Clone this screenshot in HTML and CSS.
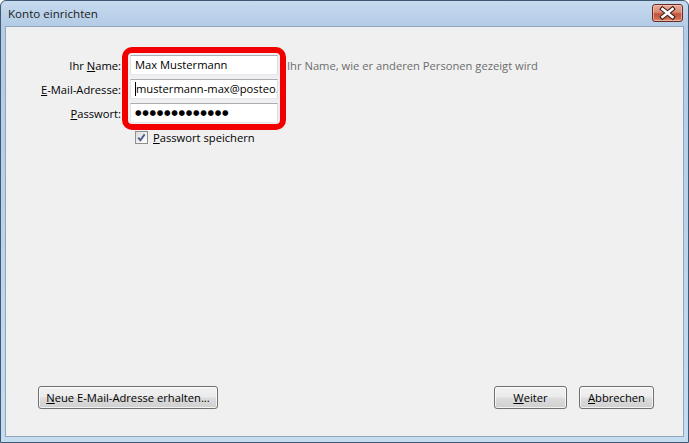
FILE: index.html
```html
<!DOCTYPE html>
<html lang="de">
<head>
<meta charset="utf-8">
<title>Konto einrichten</title>
<link rel="stylesheet" href="styles.css">
</head>
<body>
<div class="window">
  <div class="titlebar">
    <span class="title">Konto einrichten</span>
    <button class="close" aria-label="Schließen">
      <svg width="29" height="16" viewBox="0 0 29 16">
        <path d="M9.5 4 L19.5 12 M19.5 4 L9.5 12" stroke="#3b1a14" stroke-width="4.6" stroke-linecap="square" fill="none"/>
        <path d="M9.5 4 L19.5 12 M19.5 4 L9.5 12" stroke="#ffffff" stroke-width="2.6" stroke-linecap="square" fill="none"/>
      </svg>
    </button>
  </div>
  <div class="client">
    <div class="form">
      <label class="lbl">Ihr <u>N</u>ame:</label>
      <div class="field">Max Mustermann</div>
      <span class="hint">Ihr Name, wie er anderen Personen gezeigt wird</span>

      <label class="lbl"><u>E</u>-Mail-Adresse:</label>
      <div class="field"><span class="caret"></span><span class="clip">mustermann-max@posteo.de</span></div>
      <span></span>

      <label class="lbl"><u>P</u>asswort:</label>
      <div class="field"><span class="dots">●●●●●●●●●●●●●</span></div>
      <span></span>

      <span></span>
      <div class="check">
        <span class="box">
          <svg width="11" height="11" viewBox="0 0 11 11"><path d="M2.2 5.6 L4.4 8.2 L8.6 2.4" stroke="#4a5a85" stroke-width="1.8" fill="none"/></svg>
        </span>
        <span><u>P</u>asswort speichern</span>
      </div>
    </div>
    <div class="highlight"></div>
    <div class="actions">
      <button class="btn wide"><u>N</u>eue E-Mail-Adresse erhalten...</button>
      <div class="right">
        <button class="btn weiter"><u>W</u>eiter</button>
        <button class="btn cancel"><u>A</u>bbrechen</button>
      </div>
    </div>
  </div>
</div>
</body>
</html>
```

FILE: styles.css
```css
* { box-sizing: border-box; }
html, body { margin: 0; padding: 0; background: #ffffff; }
body {
  font-family: "Open Sans", "Noto Sans", sans-serif;
  font-size: 11.2px;
  color: #000;
}
.window {
  width: 689px;
  height: 443px;
  border: 1px solid #3f5874;
  border-radius: 6px 6px 0 0;
  padding: 0 4px 5px 4px;
  display: flex;
  flex-direction: column;
  background: linear-gradient(180deg, #c6daef 0px, #b4cce6 24px, #b6cee7 120px, #bfd6ec 300px, #c6ddef 443px);
}
.titlebar {
  height: 25px;
  display: flex;
  align-items: flex-start;
  justify-content: space-between;
}
.title {
  margin-top: 5px;
  margin-left: 3px;
  font-size: 11.6px;
  color: #1a1a1a;
}
.close {
  margin-top: 3px;
  margin-right: 1px;
  width: 31px;
  height: 18px;
  padding: 0;
  border: 1px solid #6a2b22;
  border-radius: 3px;
  background: linear-gradient(180deg, #e9aa98 0%, #d98a74 45%, #c4523e 55%, #cc6a50 85%, #e0957c 100%);
  box-shadow: inset 0 0 0 1px rgba(255, 210, 195, 0.55);
  display: flex;
  align-items: center;
  justify-content: center;
}
.close svg { display: block; }
.client {
  position: relative;
  flex: 1;
  border: 1px solid #8ea6c0;
  background: #f0f0f0;
  display: flex;
  flex-direction: column;
}
.form {
  display: grid;
  grid-template-columns: 115px 148px auto;
  grid-auto-rows: 20px;
  column-gap: 9px;
  row-gap: 4px;
  padding-top: 28px;
  align-items: center;
}
.lbl {
  text-align: right;
  white-space: nowrap;
}
.field {
  height: 20px;
  background: #fff;
  border: 1px solid #abadb3;
  border-left-color: #e2e3ea;
  border-right-color: #dbdfe6;
  border-bottom-color: #e3e9ef;
  padding-left: 4px;
  line-height: 18px;
  white-space: nowrap;
  overflow: hidden;
  display: flex;
  align-items: center;
}
.clip {
  overflow: hidden;
  min-width: 0;
  flex: 1;
  white-space: nowrap;
}
.caret {
  display: inline-block;
  width: 1px;
  height: 14px;
  background: #000;
  flex: none;
}
.dots {
  font-family: "DejaVu Sans", sans-serif;
  font-size: 7.5px;
  letter-spacing: 0.7px;
  color: #000;
}
.hint {
  color: #6d6d6d;
  white-space: nowrap;
}
.check {
  display: flex;
  align-items: center;
  gap: 5px;
  padding-left: 5px;
  white-space: nowrap;
}
.box {
  width: 13px;
  height: 13px;
  border: 1px solid #8e8f8f;
  background: linear-gradient(135deg, #dcdcdc, #ffffff);
  display: flex;
  align-items: center;
  justify-content: center;
}
.box svg { display: block; }
.highlight {
  position: absolute;
  left: 116px;
  top: 20px;
  width: 164px;
  height: 83px;
  border: 6px solid #f20000;
  border-radius: 10px;
  pointer-events: none;
}
.actions {
  margin-top: auto;
  padding: 0 29px 27px 32px;
  display: flex;
  justify-content: space-between;
  align-items: flex-end;
}
.right {
  display: flex;
  gap: 12px;
}
.btn {
  font-family: inherit;
  font-size: 11.2px;
  color: #000;
  height: 23px;
  padding: 0;
  border: 1px solid #707070;
  border-radius: 3px;
  background: linear-gradient(180deg, #f2f2f2 0%, #ebebeb 48%, #dddddd 52%, #cfcfcf 100%);
  box-shadow: inset 0 0 0 1px rgba(255, 255, 255, 0.7);
  white-space: nowrap;
}
.wide { width: 180px; }
.weiter { width: 73px; }
.cancel { width: 75px; }
```
